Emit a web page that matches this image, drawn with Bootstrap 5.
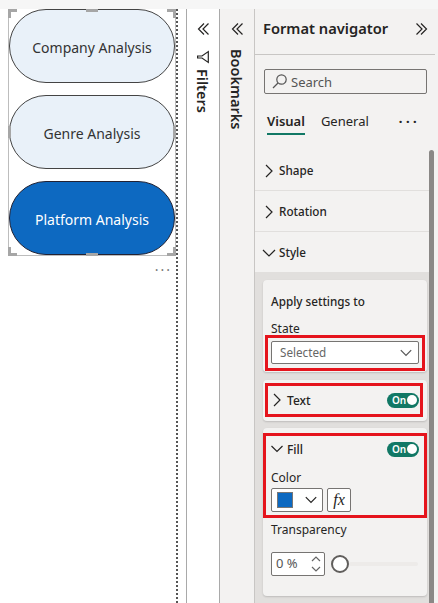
<!DOCTYPE html>
<html lang="en">
<head>
  <meta charset="UTF-8">
  <title>Format navigator</title>
  <link href="https://cdn.jsdelivr.net/npm/bootstrap@5.3.0/dist/css/bootstrap.min.css" rel="stylesheet">
  <style>
    html, body { height: 603px; overflow: hidden; }
    body { font-family: "Noto Sans", "Open Sans", sans-serif; font-size: 12px; color: #252423; background: #fff; }
    svg { display: block; fill: none; stroke: #252423; stroke-width: 1.2; overflow: visible; }
    .top-strip { height: 9px; background: #f6f6f6; }
    .work { height: 594px; }

    /* canvas with the three buttons */
    .canvas-area { width: 178px; border-right: 2px dotted #555; padding-left: 8px; }
    .sel-frame { position: relative; width: 168px; height: 247px; border: 1px solid #bdbdbd; border-top: 0; gap: 12px; }
    .pill { height: 74px; flex: none; padding-top: 3px; border: 1px solid #444; border-radius: 37px; background: #e9f1f9; font-size: 14px; color: #333; }
    .pill-on { background: #0d69c1; color: #fff; border-color: #223; }
    .grip { position: absolute; background: #a6a6a6; }
    .grip-t { top: 0; left: 77px; width: 12px; height: 3px; }
    .grip-b { bottom: -1px; left: 77px; width: 12px; height: 3px; }
    .grip-l { left: -1px; top: 117px; width: 3px; height: 12px; }
    .grip-r { right: -1px; top: 117px; width: 3px; height: 12px; }
    .corner { position: absolute; width: 9px; height: 9px; border: 3px solid #a6a6a6; }
    .c-tl { top: 0; left: -1px; border-right: 0; border-bottom: 0; }
    .c-tr { top: 0; right: -1px; border-left: 0; border-bottom: 0; }
    .c-bl { bottom: -1px; left: -1px; border-right: 0; border-top: 0; }
    .c-br { bottom: -1px; right: -1px; border-left: 0; border-top: 0; }
    .more-dots { width: 168px; padding: 6px 4px 0 0; text-align: right; color: #777; font-size: 14px; line-height: 16px; letter-spacing: 2px; }

    /* collapsed panes */
    .gutter { width: 8px; }
    .rail { border-left: 1px solid #a9a9a9; padding-top: 13px; }
    .rail-filters { width: 33px; background: #fff; }
    .rail-marks { width: 35px; background: #f3f2f1; }
    .vert { writing-mode: vertical-rl; font-size: 14.5px; font-weight: 600; line-height: 18px; }
    .funnel { margin-top: 15px; }
    .filters-lbl { margin-top: 6px; }
    .marks-lbl { margin-top: 13px; }

    /* format pane */
    .fmt-pane { position: relative; flex: 1; background: #f3f2f1; border-left: 1px solid #c8c6c4; }
    .fmt-head { height: 46px; margin-right: 3px; padding: 0 6px 6px 8px; border-bottom: 1px solid #c8c6c4; }
    .fmt-title { font-size: 14.7px; font-weight: 600; }
    .search-box { height: 25px; margin: 14px 11px 0 9px; padding-left: 7px; border: 1px solid #767472; border-radius: 2px; font-size: 13px; color: #555; }
    .tab-row { margin: 15px 18px 0 12px; height: 26px; font-size: 13px; }
    .tab-item { height: 26px; line-height: 24px; }
    .tab-active { font-weight: 600; border-bottom: 2px solid #117865; }
    .tab-dots { letter-spacing: 3px; font-size: 15px; font-weight: 600; line-height: 24px; }
    .fmt-scroll { position: absolute; top: 141px; right: 4px; width: 5px; height: 453px; background: #8a8886; border-radius: 3px 3px 0 0; }
    .sect-list { margin-top: 15px; margin-right: 9px; }
    .sect-row { height: 41px; gap: 5px; padding: 2px 0 0 9px; font-size: 11.7px; font-weight: 500; border-bottom: 1px solid #e1dfdd; }
    .sect-last { border-bottom: 0; height: 40px; }
    .sect-body { background: #e1dfdd; padding: 8px 2px 0 8px; height: 332px; }
    .fcard { width: 164px; background: #f3f2f1; border-radius: 4px; box-shadow: 0 1px 2px rgba(0,0,0,.16); }
    .fcard-state { height: 92px; padding: 14px 8px 0; margin-bottom: 8px; }
    .fcard-text { height: 41px; padding: 3px 2px 0; margin-bottom: 7px; }
    .fcard-fill { height: 168px; padding-top: 5px; }
    .lbl-head { font-size: 11.7px; line-height: 14px; font-weight: 500; }
    .lbl { font-size: 12px; line-height: 16px; padding-top: 1px; margin-bottom: -1px; }
    .state-lbl { margin-top: 12px; }
    .nudge { padding-top: 2px; }
    .red-state { margin: -2px -6px 0; padding: 3px; border: 3px solid #e5141c; height: 36px; }
    .dd-state { height: 23px; width: 148px; background: #fff; border: 1px solid #767472; border-radius: 2px; padding: 0 6px 0 8px; font-size: 11.7px; color: #666; }
    .red-text { height: 34px; width: 158px; padding: 0 1px 0 4px; border: 3px solid #e5141c; gap: 5px; font-size: 12px; font-weight: 500; }
    .red-fill { height: 85px; border: 3px solid #e5141c; padding: 2px 5px 0 5px; }
    .fill-head { height: 22px; font-weight: 500; }
    .switch-on { width: 32px; height: 15px; border-radius: 8px; background: #117865; color: #fff; font-size: 10px; font-weight: 600; padding: 0 2px 0 5px; line-height: 15px; }
    .switch-knob { width: 10px; height: 10px; border-radius: 50%; background: #fff; }
    .dd-color { width: 52px; height: 24px; background: #fff; border: 1px solid #767472; border-radius: 2px; padding: 0 5px; }
    .swatch { width: 16px; height: 16px; background: #0d69c1; border: 1px solid #777; }
    .fx-btn { width: 24px; height: 24px; background: #fff; border: 1px solid #767472; border-radius: 2px; font-family: "Liberation Serif", serif; font-style: italic; font-size: 16px; line-height: 21px; text-align: center; }
    .spin-box { width: 54px; height: 24px; background: #fff; border: 1px solid #767472; border-radius: 2px; padding: 0 3px 0 4px; font-size: 13px; color: #555; }
    .slider-track { flex: 1; height: 4px; background: #edebe9; border-radius: 2px; }
    .slider-knob { width: 18px; height: 18px; border-radius: 50%; background: #fff; border: 2.5px solid #605e5c; flex: none; margin-left: 6px; }
    .color-lbl { margin-top: 9px; }
    .color-row { margin-top: 3px; }
    .transp-lbl { margin: 3px 8px -1px; }
    .transp-row { margin: 15px 9px 0 8px; }
  </style>
</head>
<body>
  <div class="top-strip"></div>
  <div class="work d-flex">

    <!-- canvas -->
    <div class="canvas-area flex-shrink-0">
      <div class="sel-frame d-flex flex-column">
        <div class="pill d-flex align-items-center justify-content-center">Company Analysis</div>
        <div class="pill d-flex align-items-center justify-content-center">Genre Analysis</div>
        <div class="pill pill-on d-flex align-items-center justify-content-center">Platform Analysis</div>
        <span class="grip grip-t"></span><span class="grip grip-b"></span>
        <span class="grip grip-l"></span><span class="grip grip-r"></span>
        <span class="corner c-tl"></span><span class="corner c-tr"></span>
        <span class="corner c-bl"></span><span class="corner c-br"></span>
      </div>
      <div class="more-dots">···</div>
    </div>
    <div class="gutter flex-shrink-0"></div>

    <!-- filters -->
    <div class="rail rail-filters d-flex flex-column align-items-center flex-shrink-0">
      <svg width="14" height="14" viewBox="0 0 14 14"><path d="M8 1.500 2.500 7 8 12.500M12.500 1.500 7 7 12.500 12.500"/></svg>
      <svg class="funnel" width="12" height="12" viewBox="0 0 12 12"><path d="M11.300 .6V11.400L5 7H.6V5H5Z"/></svg>
      <div class="vert filters-lbl">Filters</div>
    </div>

    <!-- bookmarks -->
    <div class="rail rail-marks d-flex flex-column align-items-center flex-shrink-0">
      <svg width="14" height="14" viewBox="0 0 14 14"><path d="M8 1.500 2.500 7 8 12.500M12.500 1.500 7 7 12.500 12.500"/></svg>
      <div class="vert marks-lbl">Bookmarks</div>
    </div>

    <!-- format pane -->
    <div class="fmt-pane">
      <div class="fmt-head d-flex align-items-center justify-content-between">
        <span class="fmt-title">Format navigator</span>
        <svg width="14" height="14" viewBox="0 0 14 14"><path d="M1.500 1.500 7 7 1.500 12.500M6 1.500 11.500 7 6 12.500"/></svg>
      </div>
      <div class="search-box d-flex align-items-center gap-1">
        <svg width="15" height="15" viewBox="0 0 15 15" style="stroke:#555"><circle cx="9.500" cy="5.500" r="4.700"/><path d="M6 9 1 14"/></svg>
        <span class="nudge">Search</span>
      </div>
      <div class="tab-row d-flex align-items-start">
        <div class="tab-item tab-active">Visual</div>
        <div class="tab-item ms-3">General</div>
        <div class="tab-dots ms-auto">···</div>
      </div>
      <div class="sect-list">
        <div class="sect-row d-flex align-items-center">
          <svg width="10" height="14" viewBox="0 0 10 14"><path d="M2 1 8 7 2 13"/></svg><span>Shape</span>
        </div>
        <div class="sect-row d-flex align-items-center">
          <svg width="10" height="14" viewBox="0 0 10 14"><path d="M2 1 8 7 2 13"/></svg><span>Rotation</span>
        </div>
        <div class="sect-row sect-last d-flex align-items-center">
          <svg width="10" height="14" viewBox="0 0 10 14"><path d="M-1 4 5 10 11 4"/></svg><span>Style</span>
        </div>
        <div class="sect-body">
          <div class="fcard fcard-state">
            <div class="lbl-head">Apply settings to</div>
            <div class="lbl state-lbl">State</div>
            <div class="red-state">
              <div class="dd-state d-flex align-items-center justify-content-between">
                <span>Selected</span>
                <svg width="12" height="8" viewBox="0 0 12 8" style="stroke:#555"><path d="M.8 1.200 6 6.500 11.200 1.200"/></svg>
              </div>
            </div>
          </div>
          <div class="fcard fcard-text">
            <div class="red-text d-flex align-items-center">
              <svg width="10" height="14" viewBox="0 0 10 14"><path d="M2 1 8 7 2 13"/></svg>
              <span class="nudge">Text</span>
              <div class="switch-on d-flex align-items-center justify-content-between ms-auto"><span>On</span><span class="switch-knob"></span></div>
            </div>
          </div>
          <div class="fcard fcard-fill">
            <div class="red-fill">
              <div class="fill-head d-flex align-items-center gap-1">
                <svg width="12" height="10" viewBox="0 0 12 10"><path d="M.5 2 6 7.500 11.500 2"/></svg>
                <span class="nudge">Fill</span>
                <div class="switch-on d-flex align-items-center justify-content-between ms-auto"><span>On</span><span class="switch-knob"></span></div>
              </div>
              <div class="lbl color-lbl">Color</div>
              <div class="color-row d-flex gap-1">
                <div class="dd-color d-flex align-items-center justify-content-between">
                  <span class="swatch"></span>
                  <svg width="12" height="8" viewBox="0 0 12 8"><path d="M.8 1.200 6 6.500 11.200 1.200"/></svg>
                </div>
                <div class="fx-btn">fx</div>
              </div>
            </div>
            <div class="lbl transp-lbl">Transparency</div>
            <div class="transp-row d-flex align-items-center">
              <div class="spin-box d-flex align-items-center justify-content-between">
                <span>0 %</span>
                <svg width="10" height="18" viewBox="0 0 10 18" style="stroke:#666"><path d="M1 6 5 2 9 6M1 12 5 16 9 12"/></svg>
              </div>
              <div class="slider-knob"></div>
              <div class="slider-track"></div>
            </div>
          </div>
        </div>
      </div>
      <div class="fmt-scroll"></div>
    </div>
  </div>
  <script src="https://cdn.jsdelivr.net/npm/bootstrap@5.3.0/dist/js/bootstrap.bundle.min.js"></script>
</body>
</html>
